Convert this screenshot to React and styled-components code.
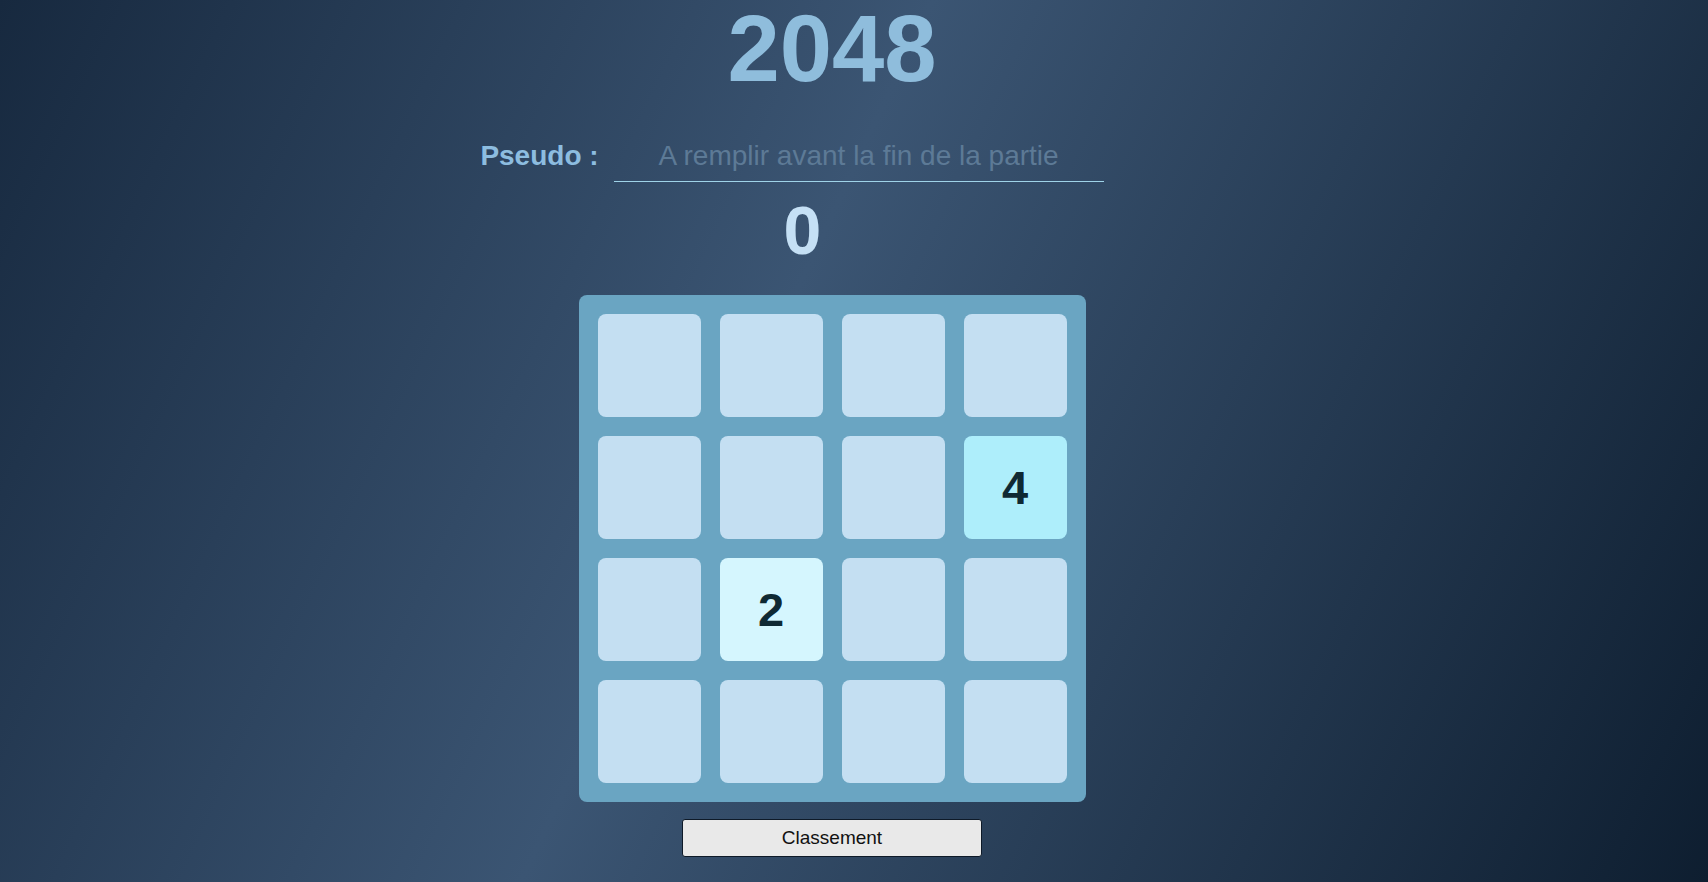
import React, { useState } from 'react';
import styled, { createGlobalStyle } from 'styled-components';

const GlobalStyle = createGlobalStyle`
        html, body {
                margin: 0;
                padding: 0;
        }
        body {
                font-family: "Liberation Sans", Arial, sans-serif;
                overflow: hidden;
        }
`

const Page = styled.div`
        min-height: 100vh;
        box-sizing: border-box;
        display: flex;
        flex-direction: column;
        align-items: center;
        padding-right: 44px;
        background: linear-gradient(115deg, #17293f 0%, #3b5573 44%, #0e1e30 100%);
`
const Title = styled.h1`
        margin: 0;
        padding-top: 2px;
        font-size: 94px;
        line-height: 94px;
        font-weight: bold;
        color: #8fbddc;
`
const PseudoRow = styled.div`
        display: flex;
        align-items: baseline;
        gap: 15px;
        margin-top: 35px;
        padding-right: 80px;
`
const Label = styled.label`
        font-size: 28px;
        font-weight: bold;
        color: #8dbde0;
`
const PseudoInput = styled.input`
        width: 490px;
        box-sizing: border-box;
        padding: 9px 0;
        font-family: "Liberation Sans", Arial, sans-serif;
        font-size: 28px;
        text-align: center;
        color: #c5e0f5;
        background: transparent;
        border: none;
        border-bottom: 1px solid #9fd3e8;
        outline: none;
        &::placeholder {
                color: #5d7a96;
                opacity: 1;
        }
`
const Score = styled.div`
        margin-top: 14px;
        margin-right: 59px;
        font-size: 68px;
        line-height: 68px;
        font-weight: bold;
        color: #c5e0f5;
`
const Board = styled.div`
        margin-top: 31px;
        display: grid;
        grid-template-columns: repeat(4, 103px);
        grid-auto-rows: 103px;
        gap: 19px;
        padding: 19px;
        background-color: #6aa5c2;
        border-radius: 8px;
`
const tileColors = {
        0: '#c4dff2',
        2: '#d5f6fe',
        4: '#aeeefb',
}
const Tile = styled.div`
        display: flex;
        align-items: center;
        justify-content: center;
        border-radius: 8px;
        background-color: ${props => tileColors[props.value] || '#8fe3f7'};
        font-size: 47px;
        font-weight: bold;
        color: #0f2933;
`
const RankButton = styled.button`
        margin-top: 17px;
        width: 300px;
        height: 38px;
        font-family: "Liberation Sans", Arial, sans-serif;
        font-size: 19px;
        color: #111;
        background-color: #e9e9e9;
        border: 1px solid #0e1a28;
        border-radius: 3px;
        cursor: pointer;
`

const startGrid = [
        0, 0, 0, 0,
        0, 0, 0, 4,
        0, 2, 0, 0,
        0, 0, 0, 0,
]

const App = () => {
        const [pseudo, setPseudo] = useState('');
        const [grid] = useState(startGrid);

        return (
                <Page>
                        <GlobalStyle />
                        <Title>2048</Title>
                        <PseudoRow>
                                <Label htmlFor="pseudo">Pseudo :</Label>
                                <PseudoInput
                                        id="pseudo"
                                        value={pseudo}
                                        onChange={e => setPseudo(e.target.value)}
                                        placeholder="A remplir avant la fin de la partie"
                                />
                        </PseudoRow>
                        <Score>0</Score>
                        <Board>
                                {grid.map((value, i) => (
                                        <Tile key={i} value={value}>{value ? value : ''}</Tile>
                                ))}
                        </Board>
                        <RankButton>Classement</RankButton>
                </Page>
        )
}

export default App;
